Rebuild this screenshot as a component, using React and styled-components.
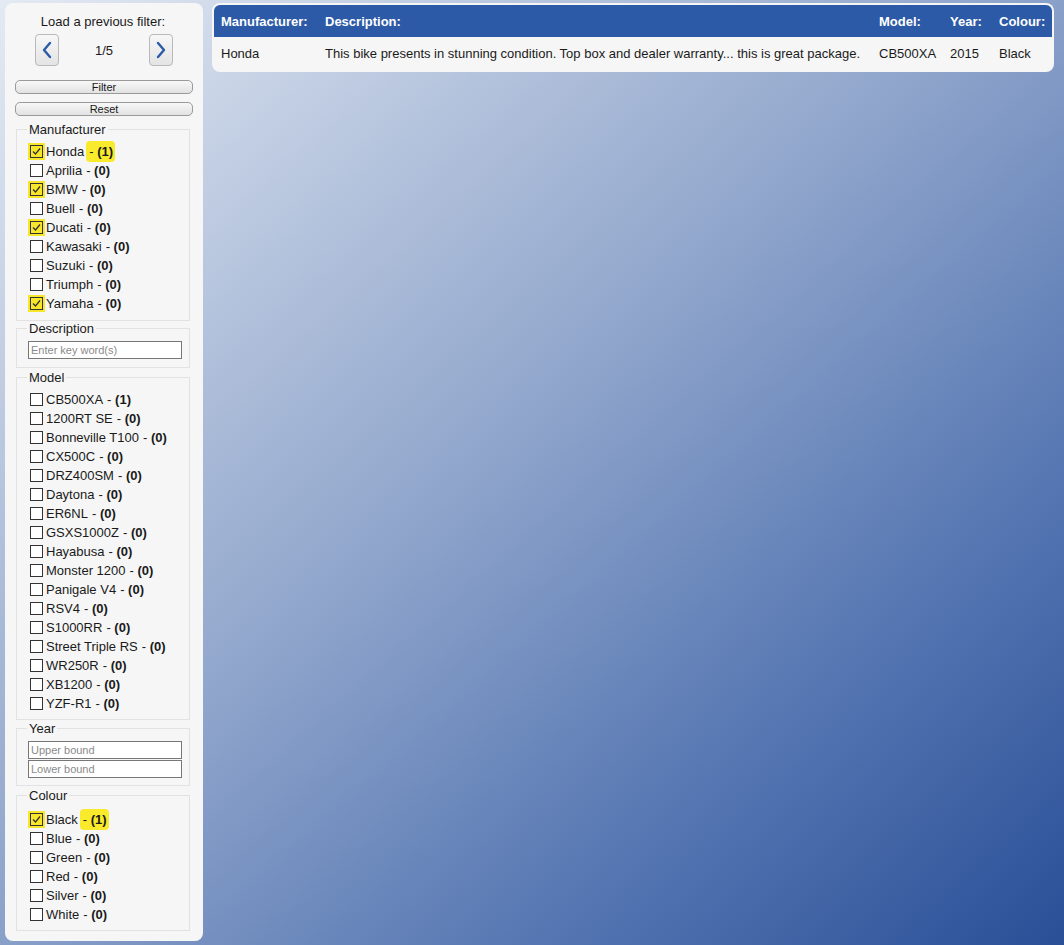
import React from 'react';
import styled, { createGlobalStyle } from 'styled-components';

const GlobalStyle = createGlobalStyle`
  html, body {
    margin: 0;
    padding: 0;
  }
  body {
    font-family: 'Liberation Sans', Arial, sans-serif;
    font-size: 13px;
    color: #1a1a1a;
    background: linear-gradient(to bottom right, #e4eaf3 0%, #93a8cd 45%, #5576b2 75%, #2a4f97 100%);
    min-height: 945px;
  }
`;

const Page = styled.div`
  display: flex;
  align-items: flex-start;
  gap: 9px;
  padding: 3px 10px 0 5px;
  min-height: 942px;
  box-sizing: border-box;
`;

const Sidebar = styled.aside`
  width: 198px;
  flex-shrink: 0;
  box-sizing: border-box;
  background: #f6f6f6;
  border-radius: 8px;
  padding: 11px 13px 10px 11px;
  display: flex;
  flex-direction: column;
`;

const Title = styled.div`
  text-align: center;
  line-height: 15px;
  color: #1a1a1a;
`;

const NavRow = styled.div`
  display: flex;
  justify-content: center;
  align-items: center;
  margin-top: 5px;
  margin-left: 2px;
`;

const NavButton = styled.button`
  width: 24px;
  height: 32px;
  padding: 0;
  border: 1px solid #b9b9b9;
  border-radius: 4px;
  background: linear-gradient(#f7f7f7, #e4e4e4);
  display: flex;
  align-items: center;
  justify-content: center;
  cursor: pointer;
`;

const Counter = styled.span`
  width: 90px;
  text-align: center;
`;

const ActionButton = styled.button`
  height: 14px;
  width: 178px;
  margin: ${p => p.$top}px 0 0 -1px;
  padding: 0;
  border: 1px solid #9a9a9a;
  border-radius: 5px;
  background: linear-gradient(#f8f8f8, #e2e2e2);
  font-family: 'Liberation Sans', Arial, sans-serif;
  font-size: 11px;
  line-height: 12px;
  color: #1a1a1a;
`;

const Group = styled.fieldset`
  margin: ${p => p.$top ?? 2}px 0 0 0;
  padding: ${p => p.$pad ?? 5}px 8px ${p => p.$bottom ?? 7}px 10px;
  border: 1px solid #e2e2e2;
  min-width: 0;
`;

const Legend = styled.legend`
  padding: 0 2px;
  line-height: 15px;
  color: #1a1a1a;
`;

const Item = styled.label`
  display: flex;
  align-items: center;
  height: 19px;
  white-space: nowrap;
`;

const Box = styled.span`
  width: 13px;
  height: 13px;
  box-sizing: border-box;
  margin: 0 3px 0 3px;
  border: 1px solid #333;
  background: ${p => (p.$checked ? '#f7e62a' : '#fff')};
  box-shadow: ${p => (p.$checked ? '0 0 0 2px #f7e62a' : 'none')};
  display: flex;
  align-items: center;
  justify-content: center;
`;

const Count = styled.span`
  font-weight: bold;
  margin-left: 4px;
`;

const Marker = styled.span`
  background: #f9ea2c;
  border-radius: 4px;
  padding: 3px 2px 3px 3px;
  margin-left: 2px;
`;

const TextInput = styled.input`
  display: block;
  width: 154px;
  height: 18px;
  box-sizing: border-box;
  margin: ${p => (p.$stack ? '1px' : '0')} 0 0 1px;
  padding: 0 2px;
  border: 1px solid #777;
  background: #fff;
  font-family: 'Liberation Sans', Arial, sans-serif;
  font-size: 11px;
  &::placeholder {
    color: #8a8a8a;
  }
`;

const TableCard = styled.div`
  flex: 1;
  background: #f6f6f6;
  border-radius: 8px;
  padding: 2px;
`;

const Table = styled.table`
  width: 100%;
  border-collapse: collapse;
  table-layout: fixed;
  th {
    background: #2c5aa7;
    color: #fff;
    font-weight: bold;
    text-align: left;
    height: 32px;
    padding: 0 7px;
  }
  th:first-child { border-top-left-radius: 6px; }
  th:last-child { border-top-right-radius: 6px; }
  td {
    height: 33px;
    padding: 0 7px;
    white-space: nowrap;
    color: #1a1a1a;
  }
`;

const Chevron = ({ dir }) => (
  <svg width="12" height="18" viewBox="0 0 12 18">
    <path
      d={dir === 'left' ? 'M9 2 L3 9 L9 16' : 'M3 2 L9 9 L3 16'}
      fill="none"
      stroke="#2c5aa7"
      strokeWidth="2.4"
      strokeLinecap="round"
      strokeLinejoin="round"
    />
  </svg>
);

const Check = () => (
  <svg width="11" height="11" viewBox="0 0 11 11">
    <path d="M2 5.5 L4.5 8 L9 2.5" fill="none" stroke="#333" strokeWidth="1.3" />
  </svg>
);

const manufacturers = [
  ['Honda', 1, true], ['Aprilia', 0], ['BMW', 0, true], ['Buell', 0], ['Ducati', 0, true],
  ['Kawasaki', 0], ['Suzuki', 0], ['Triumph', 0], ['Yamaha', 0, true],
];

const models = [
  ['CB500XA', 1], ['1200RT SE', 0], ['Bonneville T100', 0], ['CX500C', 0], ['DRZ400SM', 0],
  ['Daytona', 0], ['ER6NL', 0], ['GSXS1000Z', 0], ['Hayabusa', 0], ['Monster 1200', 0],
  ['Panigale V4', 0], ['RSV4', 0], ['S1000RR', 0], ['Street Triple RS', 0], ['WR250R', 0],
  ['XB1200', 0], ['YZF-R1', 0],
];

const colours = [
  ['Black', 1, true, true], ['Blue', 0], ['Green', 0], ['Red', 0], ['Silver', 0], ['White', 0],
];

const Option = ({ label, count, checked, marked }) => (
  <Item>
    <Box $checked={checked}>{checked && <Check />}</Box>
    {label}
    {marked ? (
      <Marker> - <b>({count})</b></Marker>
    ) : (
      <Count><span style={{ fontWeight: 'normal' }}>- </span>({count})</Count>
    )}
  </Item>
);

const App = () => {
  return (
    <>
      <GlobalStyle />
      <Page>
        <Sidebar>
          <Title>Load a previous filter:</Title>
          <NavRow>
            <NavButton><Chevron dir="left" /></NavButton>
            <Counter>1/5</Counter>
            <NavButton><Chevron dir="right" /></NavButton>
          </NavRow>
          <ActionButton $top={14}>Filter</ActionButton>
          <ActionButton $top={8}>Reset</ActionButton>

          <Group $top={6}>
            <Legend>Manufacturer</Legend>
            {manufacturers.map(([label, count, checked]) => (
              <Option key={label} label={label} count={count} checked={checked} marked={label === 'Honda'} />
            ))}
          </Group>

          <Group $top={0} $bottom={8}>
            <Legend>Description</Legend>
            <TextInput placeholder="Enter key word(s)" />
          </Group>

          <Group $bottom={6}>
            <Legend>Model</Legend>
            {models.map(([label, count]) => (
              <Option key={label} label={label} count={count} />
            ))}
          </Group>

          <Group $top={1} $bottom={7}>
            <Legend>Year</Legend>
            <TextInput placeholder="Upper bound" />
            <TextInput $stack placeholder="Lower bound" />
          </Group>

          <Group $pad={7} $bottom={6}>
            <Legend>Colour</Legend>
            {colours.map(([label, count, checked, marked]) => (
              <Option key={label} label={label} count={count} checked={checked} marked={marked} />
            ))}
          </Group>
        </Sidebar>

        <TableCard>
          <Table>
            <colgroup>
              <col style={{ width: 104 }} />
              <col style={{ width: 554 }} />
              <col style={{ width: 71 }} />
              <col style={{ width: 49 }} />
              <col style={{ width: 60 }} />
            </colgroup>
            <thead>
              <tr>
                <th>Manufacturer:</th>
                <th>Description:</th>
                <th>Model:</th>
                <th>Year:</th>
                <th>Colour:</th>
              </tr>
            </thead>
            <tbody>
              <tr>
                <td>Honda</td>
                <td>This bike presents in stunning condition. Top box and dealer warranty... this is great package.</td>
                <td>CB500XA</td>
                <td>2015</td>
                <td>Black</td>
              </tr>
            </tbody>
          </Table>
        </TableCard>
      </Page>
    </>
  );
};

export default App;
